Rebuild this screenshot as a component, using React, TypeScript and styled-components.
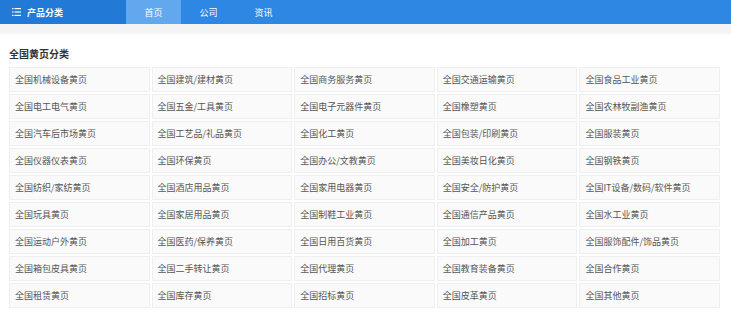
import React from "react";
import styled, { createGlobalStyle } from "styled-components";

const Global = createGlobalStyle`
  html, body { margin: 0; padding: 0; background: #fff; }
  body { font-family: "Noto Sans CJK SC", "Microsoft YaHei", sans-serif; }
  * { box-sizing: border-box; }
`;

const Header = styled.div`
  display: flex;
  height: 24px;
  background: #2d87e3;
  color: #fff;
`;

const Brand = styled.div`
  width: 126px;
  display: flex;
  align-items: center;
  gap: 6px;
  padding-left: 12px;
  background: #2379d6;
  font-size: 9px;
  font-weight: 700;
`;

const Tab = styled.div<{ $active?: boolean }>`
  width: 55px;
  display: flex;
  align-items: center;
  justify-content: center;
  font-size: 9px;
  background: ${(p) => (p.$active ? "#62a8ef" : "transparent")};
`;

const Strip = styled.div`
  height: 10px;
  background: #f4f4f4;
`;

const Main = styled.div`
  padding: 11px 11px 0 9px;
`;

const Title = styled.div`
  font-size: 10px;
  font-weight: 700;
  color: #333;
  height: 22px;
  line-height: 18px;
`;

const Grid = styled.div`
  display: grid;
  grid-template-columns: repeat(5, 1fr);
  gap: 2px;
`;

const Cell = styled.div`
  height: 25px;
  display: flex;
  align-items: center;
  padding-left: 5px;
  background: #fafafa;
  border: 1px solid #efefef;
  font-size: 9px;
  color: #555;
  white-space: nowrap;
`;

const MenuIcon = () => (
  <svg width="9" height="8" viewBox="0 0 9 8" fill="#fff">
    <rect x="0" y="0" width="1.5" height="1.2" />
    <rect x="2.5" y="0" width="6.5" height="1.2" />
    <rect x="0" y="3.4" width="1.5" height="1.2" />
    <rect x="2.5" y="3.4" width="6.5" height="1.2" />
    <rect x="0" y="6.8" width="1.5" height="1.2" />
    <rect x="2.5" y="6.8" width="6.5" height="1.2" />
  </svg>
);

const items = [
  "全国机械设备黄页", "全国建筑/建材黄页", "全国商务服务黄页", "全国交通运输黄页", "全国食品工业黄页",
  "全国电工电气黄页", "全国五金/工具黄页", "全国电子元器件黄页", "全国橡塑黄页", "全国农林牧副渔黄页",
  "全国汽车后市场黄页", "全国工艺品/礼品黄页", "全国化工黄页", "全国包装/印刷黄页", "全国服装黄页",
  "全国仪器仪表黄页", "全国环保黄页", "全国办公/文教黄页", "全国美妆日化黄页", "全国钢铁黄页",
  "全国纺织/家纺黄页", "全国酒店用品黄页", "全国家用电器黄页", "全国安全/防护黄页", "全国IT设备/数码/软件黄页",
  "全国玩具黄页", "全国家居用品黄页", "全国制鞋工业黄页", "全国通信产品黄页", "全国水工业黄页",
  "全国运动户外黄页", "全国医药/保养黄页", "全国日用百货黄页", "全国加工黄页", "全国服饰配件/饰品黄页",
  "全国箱包皮具黄页", "全国二手转让黄页", "全国代理黄页", "全国教育装备黄页", "全国合作黄页",
  "全国租赁黄页", "全国库存黄页", "全国招标黄页", "全国皮革黄页", "全国其他黄页",
];

export default function App() {
  return (
    <>
      <Global />
      <Header>
        <Brand>
          <MenuIcon />
          产品分类
        </Brand>
        <Tab $active>首页</Tab>
        <Tab>公司</Tab>
        <Tab>资讯</Tab>
      </Header>
      <Strip />
      <Main>
        <Title>全国黄页分类</Title>
        <Grid>
          {items.map((t) => (
            <Cell key={t}>{t}</Cell>
          ))}
        </Grid>
      </Main>
    </>
  );
}
